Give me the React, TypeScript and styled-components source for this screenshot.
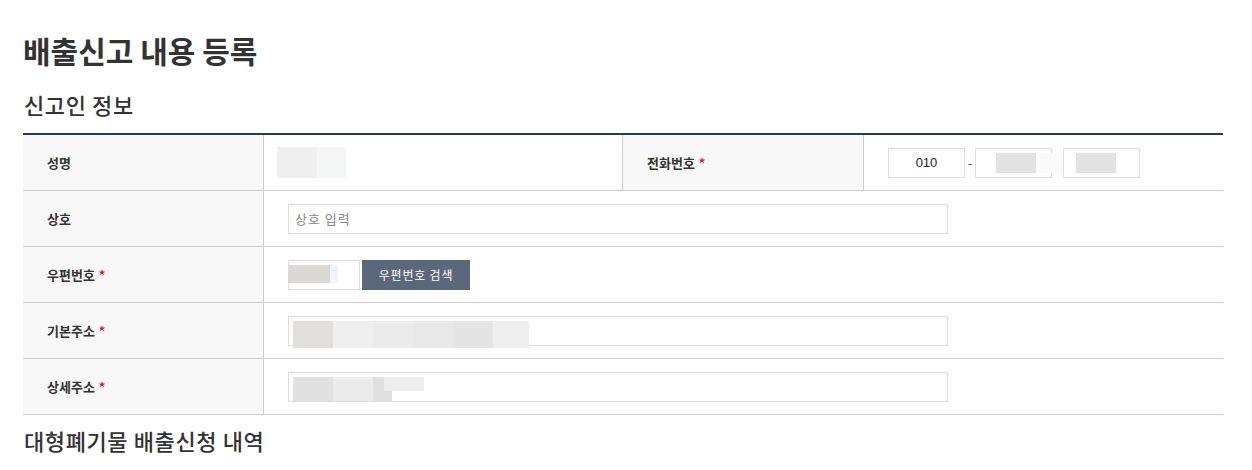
import React from "react";
import styled, { createGlobalStyle } from "styled-components";

const GlobalStyle = createGlobalStyle`
  * { box-sizing: border-box; }
  body {
    margin: 0;
    background: #fff;
    color: #333;
    font-family: "Noto Sans CJK KR", "Noto Sans", sans-serif;
  }
`;

const Page = styled.div`
  padding: 30px 29px 0 23px;
`;

const Title = styled.h2`
  margin: 0;
  font-size: 30px;
  line-height: 40px;
  font-weight: 700;
  color: #333;
`;

const SubTitle = styled.h3<{ $top: number; $bottom: number }>`
  margin: ${(p) => p.$top}px 0 ${(p) => p.$bottom}px;
  padding-left: 1px;
  font-size: 22px;
  line-height: 30px;
  font-weight: 500;
  letter-spacing: 0.6px;
  color: #333;
`;

const Table = styled.div`
  border-top: 2px solid #2b3a55;
`;

const Row = styled.div<{ $cols: string }>`
  display: grid;
  grid-template-columns: ${(p) => p.$cols};
  height: 56px;
  border-bottom: 1px solid #cccccc;
`;

const Label = styled.div<{ $left?: boolean }>`
  display: flex;
  align-items: center;
  padding-left: 24px;
  background: #f8f8f8;
  border-right: 1px solid #cccccc;
  border-left: ${(p) => (p.$left ? "1px solid #cccccc" : "none")};
  font-size: 13px;
  font-weight: 700;
  color: #333;
`;

const Star = styled.span`
  color: #e02020;
  margin-left: 4px;
`;

const Value = styled.div<{ $pad?: number; $gap?: number }>`
  display: flex;
  align-items: center;
  gap: ${(p) => p.$gap ?? 2}px;
  padding-left: ${(p) => p.$pad ?? 24}px;
`;

const TextInput = styled.input<{ $w: number }>`
  width: ${(p) => p.$w}px;
  height: 30px;
  border: 1px solid #dddddd;
  padding: 0 6px;
  font-family: inherit;
  font-size: 13px;
  letter-spacing: 1px;
  color: #333;
  outline: none;
  &::placeholder {
    color: #888;
  }
`;

const Field = styled.div<{ $w: number }>`
  position: relative;
  width: ${(p) => p.$w}px;
  height: 30px;
  border: 1px solid #dddddd;
  font-family: "Liberation Sans", Arial, sans-serif;
  font-size: 13px;
  color: #222;
  display: flex;
  align-items: center;
  justify-content: center;
  background: #fff;
`;

const Mask = styled.span<{ $x: number; $y: number; $w: number; $h: number; $c: string }>`
  position: absolute;
  left: ${(p) => p.$x}px;
  top: ${(p) => p.$y}px;
  width: ${(p) => p.$w}px;
  height: ${(p) => p.$h}px;
  background: ${(p) => p.$c};
`;

const MaskHolder = styled.div`
  position: relative;
  width: 70px;
  height: 31px;
`;

const Dash = styled.span`
  width: 10px;
  text-align: center;
  font-size: 13px;
  color: #555;
`;

const Gap = styled.span`
  width: 11px;
`;

const SearchButton = styled.button`
  height: 30px;
  width: 108px;
  border: none;
  background: #5b677a;
  color: #fff;
  font-family: inherit;
  font-size: 12px;
  letter-spacing: 0.8px;
  cursor: pointer;
`;

const App: React.FC = () => {
  return (
    <>
      <GlobalStyle />
      <Page>
        <Title>배출신고 내용 등록</Title>
        <SubTitle $top={19} $bottom={14}>신고인 정보</SubTitle>

        <Table>
          <Row $cols="241px 358px 242px 1fr">
            <Label>성명</Label>
            <Value $pad={13}>
              <MaskHolder>
                <Mask $x={0} $y={0} $w={40} $h={31} $c="#efefef" />
                <Mask $x={40} $y={0} $w={29} $h={31} $c="#f5f6f6" />
              </MaskHolder>
            </Value>
            <Label $left>
              전화번호<Star>*</Star>
            </Label>
            <Value $gap={0}>
              <Field $w={77}>010</Field>
              <Dash>-</Dash>
              <Field $w={77}>
                <Mask $x={20} $y={4} $w={40} $h={20} $c="#e2e2e2" />
                <Mask $x={60} $y={4} $w={28} $h={20} $c="#fafafa" />
              </Field>
              <Gap />
              <Field $w={77}>
                <Mask $x={12} $y={4} $w={40} $h={20} $c="#e2e2e2" />
              </Field>
            </Value>
          </Row>

          <Row $cols="241px 1fr">
            <Label>상호</Label>
            <Value>
              <TextInput $w={660} placeholder="상호 입력" />
            </Value>
          </Row>

          <Row $cols="241px 1fr">
            <Label>
              우편번호<Star>*</Star>
            </Label>
            <Value>
              <Field $w={72}>
                <Mask $x={-1} $y={4} $w={42} $h={18} $c="#dad9d8" />
                <Mask $x={41} $y={4} $w={8} $h={18} $c="#f0f4f8" />
              </Field>
              <SearchButton>우편번호 검색</SearchButton>
            </Value>
          </Row>

          <Row $cols="241px 1fr">
            <Label>
              기본주소<Star>*</Star>
            </Label>
            <Value>
              <Field $w={660}>
                <Mask $x={4} $y={4} $w={40} $h={27} $c="#e0dfde" />
                <Mask $x={44} $y={4} $w={40} $h={27} $c="#efefef" />
                <Mask $x={84} $y={4} $w={40} $h={27} $c="#ebebeb" />
                <Mask $x={124} $y={4} $w={40} $h={27} $c="#e9e9e9" />
                <Mask $x={164} $y={4} $w={40} $h={27} $c="#e5e5e5" />
                <Mask $x={204} $y={4} $w={36} $h={27} $c="#eeeeee" />
              </Field>
            </Value>
          </Row>

          <Row $cols="241px 1fr">
            <Label>
              상세주소<Star>*</Star>
            </Label>
            <Value>
              <Field $w={660}>
                <Mask $x={4} $y={4} $w={40} $h={24} $c="#e1e1e1" />
                <Mask $x={44} $y={4} $w={40} $h={24} $c="#ebebeb" />
                <Mask $x={84} $y={4} $w={19} $h={24} $c="#e0e0e0" />
                <Mask $x={95} $y={4} $w={40} $h={14} $c="#eeeeee" />
              </Field>
            </Value>
          </Row>
        </Table>

        <SubTitle $top={10} $bottom={0}>대형폐기물 배출신청 내역</SubTitle>
      </Page>
    </>
  );
};

export default App;
